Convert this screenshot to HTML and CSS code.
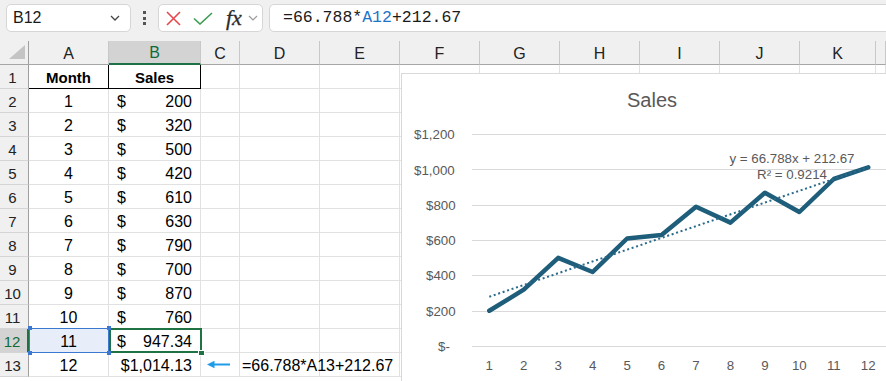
FILE: index.html
```html
<!DOCTYPE html>
<html>
<head>
<meta charset="utf-8">
<title>Sales forecast</title>
<link rel="stylesheet" href="styles.css">
</head>
<body>
<div class="toolbar">
  <div class="namebox"><span>B12</span>
    <svg class="chev" width="10" height="6" viewBox="0 0 10 6"><polyline points="1,1 5,5 9,1" fill="none" stroke="#444" stroke-width="1.3"/></svg>
  </div>
  <div class="kebab"><i></i><i></i><i></i></div>
  <div class="fxbox">
    <svg class="ic-x" width="15" height="15" viewBox="0 0 15 15"><path d="M1 1L14 14M14 1L1 14" stroke="#e5484d" stroke-width="1.6" fill="none"/></svg>
    <svg class="ic-ok" width="20" height="13" viewBox="0 0 20 13"><polyline points="1,6.5 7,12 19,1" fill="none" stroke="#3b9c52" stroke-width="1.6"/></svg>
    <span class="fx">fx</span>
    <svg class="ic-dd" width="10" height="6" viewBox="0 0 10 6"><polyline points="1,1 5,5 9,1" fill="none" stroke="#9a9a9a" stroke-width="1.2"/></svg>
  </div>
  <div class="formula">=66.788*<span class="ref">A12</span>+212.67</div>
</div>

<div class="sheet">
  <div class="corner"><span class="tri"></span></div>
  <div class="ch">A</div><div class="ch sel">B</div><div class="ch">C</div><div class="ch">D</div><div class="ch">E</div><div class="ch">F</div><div class="ch">G</div><div class="ch">H</div><div class="ch">I</div><div class="ch">J</div><div class="ch">K</div><div class="ch"></div>

  <div class="rh">1</div><div class="c hd">Month</div><div class="c hd">Sales</div><div class="c"></div><div class="c"></div><div class="c"></div><div class="c"></div><div class="c"></div><div class="c"></div><div class="c"></div><div class="c"></div><div class="c"></div><div class="c"></div>

  <div class="rh">2</div><div class="c ctr">1</div><div class="c acc"><span>$</span><span>200</span></div><div class="c"></div><div class="c"></div><div class="c"></div><div class="c"></div><div class="c"></div><div class="c"></div><div class="c"></div><div class="c"></div><div class="c"></div><div class="c"></div>

  <div class="rh">3</div><div class="c ctr">2</div><div class="c acc"><span>$</span><span>320</span></div><div class="c"></div><div class="c"></div><div class="c"></div><div class="c"></div><div class="c"></div><div class="c"></div><div class="c"></div><div class="c"></div><div class="c"></div><div class="c"></div>

  <div class="rh">4</div><div class="c ctr">3</div><div class="c acc"><span>$</span><span>500</span></div><div class="c"></div><div class="c"></div><div class="c"></div><div class="c"></div><div class="c"></div><div class="c"></div><div class="c"></div><div class="c"></div><div class="c"></div><div class="c"></div>

  <div class="rh">5</div><div class="c ctr">4</div><div class="c acc"><span>$</span><span>420</span></div><div class="c"></div><div class="c"></div><div class="c"></div><div class="c"></div><div class="c"></div><div class="c"></div><div class="c"></div><div class="c"></div><div class="c"></div><div class="c"></div>

  <div class="rh">6</div><div class="c ctr">5</div><div class="c acc"><span>$</span><span>610</span></div><div class="c"></div><div class="c"></div><div class="c"></div><div class="c"></div><div class="c"></div><div class="c"></div><div class="c"></div><div class="c"></div><div class="c"></div><div class="c"></div>

  <div class="rh">7</div><div class="c ctr">6</div><div class="c acc"><span>$</span><span>630</span></div><div class="c"></div><div class="c"></div><div class="c"></div><div class="c"></div><div class="c"></div><div class="c"></div><div class="c"></div><div class="c"></div><div class="c"></div><div class="c"></div>

  <div class="rh">8</div><div class="c ctr">7</div><div class="c acc"><span>$</span><span>790</span></div><div class="c"></div><div class="c"></div><div class="c"></div><div class="c"></div><div class="c"></div><div class="c"></div><div class="c"></div><div class="c"></div><div class="c"></div><div class="c"></div>

  <div class="rh">9</div><div class="c ctr">8</div><div class="c acc"><span>$</span><span>700</span></div><div class="c"></div><div class="c"></div><div class="c"></div><div class="c"></div><div class="c"></div><div class="c"></div><div class="c"></div><div class="c"></div><div class="c"></div><div class="c"></div>

  <div class="rh">10</div><div class="c ctr">9</div><div class="c acc"><span>$</span><span>870</span></div><div class="c"></div><div class="c"></div><div class="c"></div><div class="c"></div><div class="c"></div><div class="c"></div><div class="c"></div><div class="c"></div><div class="c"></div><div class="c"></div>

  <div class="rh">11</div><div class="c ctr">10</div><div class="c acc"><span>$</span><span>760</span></div><div class="c"></div><div class="c"></div><div class="c"></div><div class="c"></div><div class="c"></div><div class="c"></div><div class="c"></div><div class="c"></div><div class="c"></div><div class="c"></div>

  <div class="rh sel">12</div>
  <div class="c ctr refcell">11<i class="hnd tl"></i><i class="hnd tr"></i><i class="hnd bl"></i><i class="hnd br"></i></div>
  <div class="c acc active"><span>$</span><span>947.34</span><i class="fill"></i></div>
  <div class="c"></div><div class="c"></div><div class="c"></div><div class="c"></div><div class="c"></div><div class="c"></div><div class="c"></div><div class="c"></div><div class="c"></div><div class="c"></div>

  <div class="rh">13</div><div class="c ctr">12</div><div class="c rgt">$1,014.13</div>
  <div class="c arrowcell"><svg width="23" height="9" viewBox="0 0 23 9"><path d="M0 4.5L7.5 0.8V8.2Z" fill="#1e9be9"/><line x1="6" y1="4.5" x2="23" y2="4.5" stroke="#1e9be9" stroke-width="2"/></svg></div>
  <div class="c note">=66.788*A13+212.67</div>
  <div class="c"></div><div class="c"></div><div class="c"></div><div class="c"></div><div class="c"></div><div class="c"></div><div class="c"></div><div class="c"></div>
</div>

<div class="chart">
  <svg width="485" height="308" viewBox="0 0 485 308">
    <rect x="0.5" y="0.5" width="600" height="400" fill="#fff" stroke="#d9d9d9"/>
    <text class="title" x="251" y="34" text-anchor="middle">Sales</text>
    <g stroke="#d9d9d9" stroke-width="1">
      <line x1="71" x2="485" y1="61.5" y2="61.5"/>
      <line x1="71" x2="485" y1="96.5" y2="96.5"/>
      <line x1="71" x2="485" y1="132.5" y2="132.5"/>
      <line x1="71" x2="485" y1="167.5" y2="167.5"/>
      <line x1="71" x2="485" y1="202.5" y2="202.5"/>
      <line x1="71" x2="485" y1="238.5" y2="238.5"/>
      <line x1="71" x2="485" y1="273.5" y2="273.5"/>
    </g>
    <g class="lab">
      <text x="13" y="66.3">$1,200</text>
      <text x="13" y="101.5">$1,000</text>
      <text x="25" y="136.8">$800</text>
      <text x="25" y="172">$600</text>
      <text x="25" y="207.3">$400</text>
      <text x="25" y="242.5">$200</text>
      <text x="37" y="277.8">$-</text>
    </g>
    <g class="lab" text-anchor="middle">
      <text x="88.3" y="297">1</text>
      <text x="122.75" y="297">2</text>
      <text x="157.2" y="297">3</text>
      <text x="191.65" y="297">4</text>
      <text x="226.1" y="297">5</text>
      <text x="260.55" y="297">6</text>
      <text x="295" y="297">7</text>
      <text x="329.45" y="297">8</text>
      <text x="363.9" y="297">9</text>
      <text x="398.35" y="297">10</text>
      <text x="432.8" y="297">11</text>
      <text x="467.25" y="297">12</text>
    </g>
    <polyline points="88.3,237.75 122.75,216.6 157.2,184.9 191.65,199 226.1,165.5 260.55,162 295,133.8 329.45,149.6 363.9,119.7 398.35,139 432.8,106 467.25,94.3" fill="none" stroke="#1f5e7b" stroke-width="4.5" stroke-linejoin="round" stroke-linecap="round"/>
    <line x1="88.3" y1="223.75" x2="467.25" y2="94.26" stroke="#2a6a8a" stroke-width="2" stroke-dasharray="2 2.7"/>
    <g class="lab" text-anchor="middle">
      <text x="391" y="89.7">y = 66.788x + 212.67</text>
      <text x="391" y="106.3">R² = 0.9214</text>
    </g>
  </svg>
</div>
</body>
</html>
```

FILE: styles.css
```css
* { box-sizing: border-box; }
html, body { margin: 0; padding: 0; }
body {
  width: 886px;
  height: 381px;
  overflow: hidden;
  position: relative;
  background: #fff;
  font-family: "Liberation Sans", Arial, sans-serif;
  color: #000;
}

/* formula bar */
.toolbar {
  height: 41px;
  background: #f0f0f0;
  display: flex;
  align-items: flex-start;
  padding: 4px 0 0 6px;
}
.namebox {
  width: 125px;
  height: 28px;
  flex: none;
  background: #fff;
  border: 1px solid #d6d6d6;
  border-radius: 5px;
  display: flex;
  align-items: center;
  justify-content: space-between;
  padding: 0 10px 0 6px;
  font-size: 16px;
  color: #1a1a1a;
}
.kebab {
  width: 27px;
  height: 28px;
  flex: none;
  display: flex;
  flex-direction: column;
  align-items: center;
  justify-content: center;
  gap: 2.5px;
}
.kebab i { display: block; width: 3px; height: 3px; background: #555; }
.fxbox {
  width: 105px;
  height: 28px;
  flex: none;
  background: #fff;
  border: 1px solid #d6d6d6;
  border-radius: 5px;
  display: flex;
  align-items: center;
  padding-left: 7px;
}
.ic-x { margin-right: 12px; }
.ic-ok { margin-right: 13px; }
.fx {
  font-family: "Liberation Serif", "Times New Roman", serif;
  font-style: italic;
  font-size: 22px;
  color: #2b2b2b;
  line-height: 20px;
  margin-right: 6px;
  -webkit-text-stroke: 0.3px #2b2b2b;
}
.formula {
  flex: 1;
  margin-left: 6px;
  margin-right: -10px;
  height: 28px;
  background: #fff;
  border: 1px solid #d6d6d6;
  border-radius: 5px;
  padding-left: 13px;
  font-family: "Liberation Mono", "Courier New", monospace;
  font-size: 16.5px;
  line-height: 26px;
  color: #1a1a1a;
  white-space: nowrap;
}
.ref { color: #1f74c8; }

/* grid */
.sheet {
  display: grid;
  grid-template-columns: 29px 80px 92px 39px repeat(7, 80px) 76px 1fr;
  grid-template-rows: 24px repeat(13, 24px);
  font-size: 16px;
}
.corner {
  background: #f0f0f0;
  border-right: 1px solid #9e9e9e;
  border-bottom: 1px solid #a6a6a6;
}
.tri {
  display: block;
  width: 16px;
  height: 14px;
  margin: 4px 0 0 9px;
  background: #c4c4c4;
  clip-path: polygon(100% 0, 100% 100%, 0 100%);
}
.ch {
  background: #f0f0f0;
  border-right: 1px solid #c8c8c8;
  border-bottom: 1px solid #a6a6a6;
  display: flex;
  align-items: flex-end;
  justify-content: center;
  padding-bottom: 1px;
  line-height: 18px;
  font-size: 16px;
  color: #222;
}
.ch.sel {
  background: #d3d3d3;
  color: #106b38;
  border-bottom: 2px solid #1e7145;
}
.rh {
  background: #f0f0f0;
  border-right: 1px solid #9e9e9e;
  border-bottom: 1px solid #d5d5d5;
  display: flex;
  align-items: flex-end;
  justify-content: center;
  padding: 0 3px 1px 0;
  line-height: 18px;
  font-size: 15px;
  color: #222;
}
.rh.sel {
  background: #d3d3d3;
  color: #106b38;
  border-right: 2px solid #1e7145;
}
.c {
  border-right: 1px solid #e1e1e1;
  border-bottom: 1px solid #e1e1e1;
  display: flex;
  align-items: flex-end;
  padding-bottom: 1px;
  line-height: 18px;
  white-space: nowrap;
  min-width: 0;
}
.ctr { justify-content: center; }
.acc { justify-content: space-between; padding-left: 8px; padding-right: 8px; }
.rgt { justify-content: flex-end; padding-right: 8px; }
.hd {
  justify-content: center;
  font-weight: bold;
  font-size: 15px;
  border-right: 1px solid #000;
  border-bottom: 1px solid #000;
}
.note { padding-left: 2px; overflow: visible; }
.arrowcell { align-items: center; padding: 0 0 0 6px; }

/* selections */
.refcell { background: #e8eef9; position: relative; }
.refcell::after {
  content: "";
  position: absolute;
  left: 0;
  top: -1px;
  right: -1px;
  bottom: -1px;
  border: 1px solid #3b78d0;
}
.hnd {
  position: absolute;
  width: 4px;
  height: 4px;
  background: #3b78d0;
  z-index: 2;
}
.hnd.tl { left: -1px; top: -3px; }
.hnd.tr { right: -3px; top: -3px; }
.hnd.bl { left: -1px; bottom: -3px; }
.hnd.br { right: -3px; bottom: -3px; }
.active { position: relative; }
.active::after {
  content: "";
  position: absolute;
  left: 0;
  top: -1px;
  right: -2px;
  bottom: -1px;
  border: 2px solid #1f7244;
}
.fill {
  position: absolute;
  right: -5px;
  bottom: -4px;
  width: 7px;
  height: 6px;
  background: #1f7244;
  border: 1px solid #fff;
  z-index: 3;
}

/* chart */
.chart {
  position: absolute;
  left: 401px;
  top: 73px;
  width: 485px;
  height: 308px;
}
.chart svg { display: block; }
.title { font-size: 20px; fill: #595959; }
.lab { font-size: 13.3px; fill: #595959; }
```
